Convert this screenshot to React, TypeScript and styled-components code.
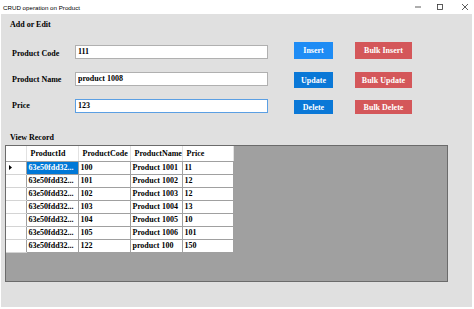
import styled, { createGlobalStyle } from 'styled-components';

type Product = {
  id: string,
  code: string,
  name: string,
  price: string,
}

const products: Product[] = [
  { id: '63e50fdd32...', code: '100', name: 'Product 1001', price: '11' },
  { id: '63e50fdd32...', code: '101', name: 'Product 1002', price: '12' },
  { id: '63e50fdd32...', code: '102', name: 'Product 1003', price: '12' },
  { id: '63e50fdd32...', code: '103', name: 'Product 1004', price: '13' },
  { id: '63e50fdd32...', code: '104', name: 'Product 1005', price: '10' },
  { id: '63e50fdd32...', code: '105', name: 'Product 1006', price: '101' },
  { id: '63e50fdd32...', code: '122', name: 'product 100', price: '150' },
];

const GlobalStyle = createGlobalStyle`
  html, body {
    margin: 0;
    padding: 0;
    background: #fff;
  }

  * {
    box-sizing: border-box;
  }
`;

const Window = styled.div`
  width: 474px;
  height: 309px;
  display: flex;
  flex-direction: column;
  background: #fff;
  overflow: hidden;
  font-family: 'Liberation Serif', 'Times New Roman', serif;
  color: #000;
`;

const TitleBar = styled.div`
  flex: none;
  height: 14px;
  display: flex;
  align-items: center;
  padding-left: 3px;
  font-family: 'Liberation Sans', Arial, sans-serif;
  font-size: 6.2px;
`;

const Title = styled.div`
  flex: 1;
`;

const Controls = styled.div`
  display: flex;
  align-items: center;
  padding-right: 6px;
`;

const ControlIcon = styled.svg<{ $ml: number }>`
  width: 6px;
  height: 6px;
  margin-left: ${p => p.$ml}px;
  stroke: #333;
  stroke-width: 0.8;
  fill: none;
`;

const Body = styled.div`
  flex: 1;
  margin: 0 2px 2px 1px;
  padding-top: 6px;
  display: flex;
  flex-direction: column;
  background: #e0e0e0;
`;

const Heading = styled.div<{ $mt?: number }>`
  margin: ${p => p.$mt ?? 0}px 0 0 9px;
  font-size: 8px;
  font-weight: bold;
  line-height: 10px;
`;

const Form = styled.div`
  margin-top: 11px;
  padding-left: 11px;
  display: flex;
  flex-direction: column;
  gap: 6px;
`;

const Row = styled.div`
  height: 21px;
  display: flex;
  align-items: center;
`;

const Label = styled.div<{ $dy?: number }>`
  width: 63px;
  margin-top: ${p => p.$dy ?? 0}px;
  font-size: 8px;
  font-weight: bold;
`;

const Field = styled.input<{ $focused?: boolean }>`
  width: 193px;
  height: 14px;
  padding: 0 2px;
  border: 1px solid ${p => p.$focused ? '#5b9fe3' : '#b0b0b0'};
  background: #fff;
  font-family: 'Liberation Serif', 'Times New Roman', serif;
  font-size: 8px;
  font-weight: bold;
  color: #000;
  outline: none;
`;

const Actions = styled.div`
  margin-left: 26px;
  display: flex;
  align-items: center;
  gap: 22px;
`;

const Button = styled.button<{ $w: number, $h: number, $bg: string, $dy?: number }>`
  width: ${p => p.$w}px;
  height: ${p => p.$h}px;
  margin-top: ${p => p.$dy ?? 0}px;
  padding: 0;
  border: none;
  background: ${p => p.$bg};
  color: #fff;
  font-family: 'Liberation Serif', 'Times New Roman', serif;
  font-size: 8px;
  font-weight: bold;
`;

const GridArea = styled.div`
  height: 137px;
  margin: 2px 24px 0 4px;
  border: 1px solid #6b6b6b;
  background: #a0a0a0;
`;

const Table = styled.table`
  width: 227px;
  border-collapse: collapse;
  table-layout: fixed;
  background: #fff;
  font-size: 8px;
  font-weight: bold;
`;

const HeadCell = styled.th<{ $w: number }>`
  width: ${p => p.$w}px;
  height: 15px;
  padding: 0 0 0 4px;
  border-right: 1px solid #e2e2e2;
  border-bottom: 1px solid #a0a0a0;
  text-align: left;
  white-space: nowrap;
  overflow: hidden;
`;

const RowHead = styled.td`
  height: 13px;
  padding: 0 0 0 3px;
  border-right: 1px solid #a0a0a0;
  border-bottom: 1px solid #d4d4d4;
`;

const Cell = styled.td<{ $selected?: boolean }>`
  height: 13px;
  padding: 0 0 0 2px;
  border: 1px solid #a0a0a0;
  white-space: nowrap;
  overflow: hidden;
  background: ${p => p.$selected ? '#0078d7' : '#fff'};
  color: ${p => p.$selected ? '#fff' : '#000'};
`;

const Arrow = styled.svg`
  display: block;
  width: 3px;
  height: 5px;
  fill: #000;
`;

const App = () => (
  <>
    <GlobalStyle/>
    <Window>
      <TitleBar>
        <Title>CRUD operation on Product</Title>
        <Controls>
          <ControlIcon $ml={0} viewBox="0 0 6 6"><path d="M0 3h6"/></ControlIcon>
          <ControlIcon $ml={16} viewBox="0 0 6 6"><rect x="0.5" y="0.5" width="5" height="5"/></ControlIcon>
          <ControlIcon $ml={19} viewBox="0 0 6 6"><path d="M0 0l6 6M6 0l-6 6"/></ControlIcon>
        </Controls>
      </TitleBar>

      <Body>
        <Heading>Add or Edit</Heading>

        <Form>
          <Row>
            <Label $dy={3}>Product Code</Label>
            <Field readOnly value="111"/>
            <Actions>
              <Button $w={39} $h={17} $bg="#1e8cf5" $dy={-2}>Insert</Button>
              <Button $w={57} $h={17} $bg="#d4575a" $dy={-2}>Bulk Insert</Button>
            </Actions>
          </Row>
          <Row>
            <Label $dy={1}>Product Name</Label>
            <Field readOnly value="product 1008"/>
            <Actions>
              <Button $w={39} $h={16} $bg="#0a78d7" $dy={3}>Update</Button>
              <Button $w={57} $h={16} $bg="#d4575a" $dy={3}>Bulk Update</Button>
            </Actions>
          </Row>
          <Row>
            <Label>Price</Label>
            <Field readOnly $focused value="123"/>
            <Actions>
              <Button $w={39} $h={14} $bg="#0a78d7" $dy={3}>Delete</Button>
              <Button $w={57} $h={14} $bg="#d4575a" $dy={3}>Bulk Delete</Button>
            </Actions>
          </Row>
        </Form>

        <Heading $mt={17}>View Record</Heading>

        <GridArea>
          <Table>
            <thead>
              <tr>
                <HeadCell $w={20}/>
                <HeadCell $w={52}>ProductId</HeadCell>
                <HeadCell $w={52}>ProductCode</HeadCell>
                <HeadCell $w={52}>ProductName</HeadCell>
                <HeadCell $w={51}>Price</HeadCell>
              </tr>
            </thead>
            <tbody>
              {products.map((p, i) => (
                <tr key={p.code}>
                  <RowHead>
                    {i === 0 && (
                      <Arrow viewBox="0 0 3 5"><path d="M0 0l3 2.5L0 5z"/></Arrow>
                    )}
                  </RowHead>
                  <Cell $selected={i === 0}>{p.id}</Cell>
                  <Cell>{p.code}</Cell>
                  <Cell>{p.name}</Cell>
                  <Cell>{p.price}</Cell>
                </tr>
              ))}
            </tbody>
          </Table>
        </GridArea>
      </Body>
    </Window>
  </>
);

export default App;
